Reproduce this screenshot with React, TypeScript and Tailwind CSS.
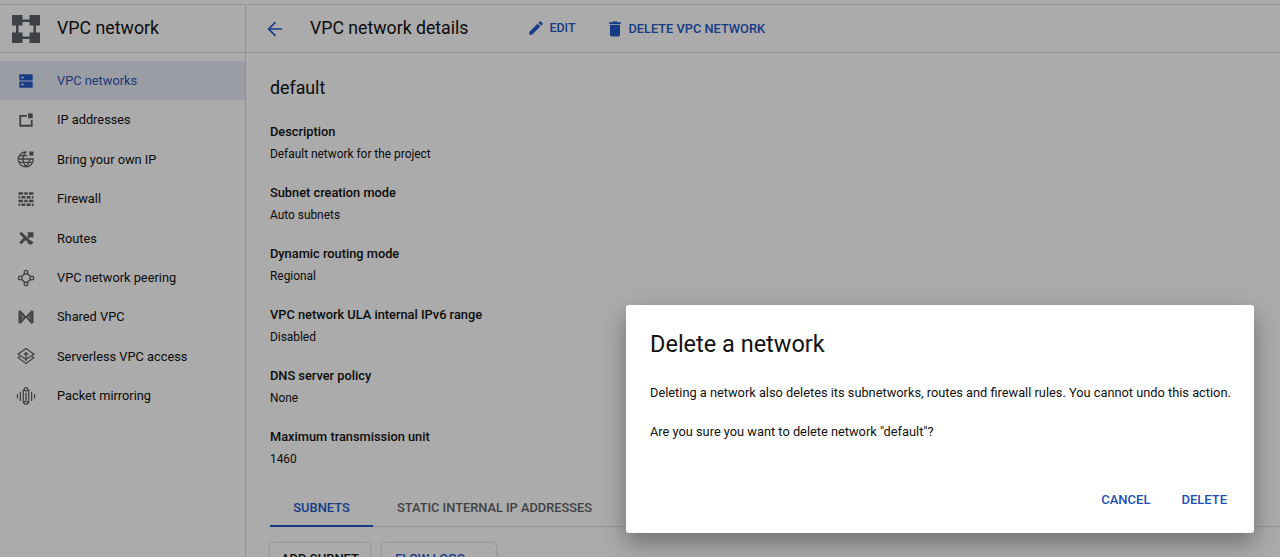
import type { ReactNode } from 'react';
import { ArrowLeft } from 'lucide-react';

function NavIcon({ children, className }: { children: ReactNode; className?: string }) {
  return (
    <svg viewBox="0 0 24 24" className={className ?? 'h-[20px] w-[20px] text-[#5f6368]'} fill="currentColor">
      {children}
    </svg>
  );
}

const nav = [
  {
    label: 'VPC networks',
    active: true,
    icon: (
      <>
        <path fillRule="evenodd" d="M4 4h16v7.500H4zM4 12.500h16V20H4zM6.500 6.500h2.500V9H6.500zM6.500 15h2.500v2.500H6.500z" />
      </>
    ),
  },
  {
    label: 'IP addresses',
    icon: (
      <>
        <path d="M4 6h9v2.200H6.200v9.600h11.600V12H20v8H4z" />
        <path d="M14.500 4H20v6h-5.500z" />
      </>
    ),
  },
  {
    label: 'Bring your own IP',
    icon: (
      <g>
        <path fill="none" stroke="currentColor" strokeWidth="1.600" d="M13 3.600A9 9 0 1 0 20.600 11M3 12h18M3.800 8h10M3.800 16h16.400M12 3c-5 5.500-5 12.500 0 18c3-3.300 4.500-6.500 4.500-9" />
        <path d="M16 3h5v5h-5z" />
      </g>
    ),
  },
  {
    label: 'Firewall',
    icon: (
      <path d="M3 4h5.500v3H3zM10 4h4v3h-4zM15.500 4H21v3h-5.500zM3 8.500h2v3H3zM6.500 8.500h4.700v3H6.500zM12.800 8.500h4.700v3h-4.700zM19 8.500h2v3h-2zM3 13h5.500v3H3zM10 13h4v3h-4zM15.500 13H21v3h-5.500zM3 17.500h2v3H3zM6.500 17.500h4.700v3H6.500zM12.800 17.500h4.700v3h-4.700zM19 17.500h2v3h-2z" />
    ),
  },
  {
    label: 'Routes',
    icon: (
      <path d="M4 7 6.500 4.500 19 17 16.500 19.500zM4 17 9 12 11.500 14.500 6.500 19.500zM13 10.500 15.500 8H14V5H21V11.500H18V10L15.500 13zM14 16H17V14L21 17.500 17 21V19H14z" />
    ),
  },
  {
    label: 'VPC network peering',
    icon: (
      <g fill="none" stroke="currentColor" strokeWidth="1.600">
        <circle cx="12" cy="5" r="2.200" />
        <circle cx="12" cy="19" r="2.200" />
        <circle cx="5" cy="12" r="2.200" />
        <circle cx="19" cy="12" r="2.200" />
        <path d="M10.500 6.500 6.500 10.500M13.500 6.500 17.500 10.500M6.500 13.500 10.500 17.500M17.500 13.500 13.500 17.500" />
      </g>
    ),
  },
  {
    label: 'Shared VPC',
    icon: (
      <g>
        <path d="M3 4.500h2v15H3zM19 4.500h2v15h-2z" />
        <path fill="currentColor" fillOpacity="0.55" stroke="currentColor" strokeWidth="2" d="M6 6 11.500 12 6 18zM18 6 12.500 12 18 18z" />
      </g>
    ),
  },
  {
    label: 'Serverless VPC access',
    icon: (
      <g fill="none" stroke="currentColor" strokeWidth="1.500">
        <path d="M12 3 21.500 10 12 16 2.500 10z" />
        <path d="M5 12.500 2.500 14 12 21 21.500 14 19 12.500" />
        <path d="M12 8v10M9.500 10.500 12 8l2.500 2.500" />
      </g>
    ),
  },
  {
    label: 'Packet mirroring',
    icon: (
      <g>
        <path d="M1 10h1.500v5H1zM4.500 7H6v11H4.500zM8 4h1.500v17H8zM14.500 4H16v17h-1.500zM18 7h1.500v11H18zM21.500 10H23v5h-1.500zM11.300 8h1.500v9h-1.500z" />
        <g fill="#fff" stroke="currentColor" strokeWidth="1.500">
          <circle cx="12" cy="4" r="2" />
          <circle cx="12" cy="20" r="2" />
        </g>
      </g>
    ),
  },
];

const details = [
  { label: 'Description', value: 'Default network for the project' },
  { label: 'Subnet creation mode', value: 'Auto subnets' },
  { label: 'Dynamic routing mode', value: 'Regional' },
  { label: 'VPC network ULA internal IPv6 range', value: 'Disabled' },
  { label: 'DNS server policy', value: 'None' },
  { label: 'Maximum transmission unit', value: '1460' },
];

export default function App() {
  return (
    <div className="relative h-[557px] w-[1280px] overflow-hidden bg-white font-['Roboto',sans-serif] text-[#111111]">
      <div className="h-[5px] border-b border-[#e0e0e0]" />
      <div className="flex h-[552px]">
        <aside className="w-[246px] flex-shrink-0 border-r border-[#dadce0]">
          <div className="flex h-[48px] items-center border-b border-[#dadce0] pl-[12px]">
            <svg viewBox="0 0 28 28" className="h-[28px] w-[28px] text-[#5f6368]" fill="currentColor">
              <path d="M0 0h10.500v10.500H0zM17.500 0H28v10.500H17.500zM0 17.500h10.500V28H0zM17.500 17.500H28V28H17.500zM10 4.500h8v2.500h-8zM10 21.500h8V24h-8zM4 10h2.500v8H4zM21.500 10H24v8h-2.500z" />
            </svg>
            <span className="ml-[17px] text-[17.800px]">VPC network</span>
          </div>
          <nav className="pt-[8px]">
            {nav.map((item) => (
              <div
                key={item.label}
                className={
                  item.active
                    ? 'flex h-[39.400px] items-center bg-[#e8eaf6] text-[#2f52b0]'
                    : 'flex h-[39.400px] items-center'
                }
              >
                <div className="flex w-[57px] justify-center pr-[6px]">
                  <NavIcon className={item.active ? 'h-[20px] w-[20px] text-[#2558c8]' : 'h-[20px] w-[20px] text-[#5f6368]'}>
                    {item.icon}
                  </NavIcon>
                </div>
                <span className="text-[12.800px]">{item.label}</span>
              </div>
            ))}
          </nav>
        </aside>

        <main className="min-w-0 flex-1">
          <div className="flex h-[48px] items-center border-b border-[#dadce0] pl-[18px]">
            <ArrowLeft className="h-[22px] w-[22px] text-[#2558c8]" strokeWidth={1.8} />
            <h1 className="ml-[24px] text-[17.700px]">VPC network details</h1>
            <button className="ml-[59px] flex items-center text-[12.400px] font-medium text-[#2558c8]">
              <svg viewBox="0 0 24 24" className="mr-[4px] h-[18px] w-[18px]" fill="currentColor">
                <path d="M3 17.250V21h3.750L17.810 9.940l-3.750-3.750zM20.710 7.040a1 1 0 0 0 0-1.410l-2.340-2.340a1 1 0 0 0-1.410 0l-1.830 1.830 3.750 3.750z" />
              </svg>
              EDIT
            </button>
            <button className="ml-[30px] flex items-center text-[12.800px] font-medium text-[#2558c8]">
              <svg viewBox="0 0 24 24" className="mr-[3px] h-[20px] w-[20px]" fill="currentColor">
                <path d="M6 19c0 1.100.9 2 2 2h8c1.100 0 2-.9 2-2V7H6zM19 4h-3.500l-1-1h-5l-1 1H5v2h14z" />
              </svg>
              DELETE VPC NETWORK
            </button>
          </div>

          <div className="pl-[24px]">
            <h2 className="mt-[24px] text-[17.800px] leading-[22px]">default</h2>
            <div className="mt-[24px] flex flex-col gap-[22px]">
              {details.map((d) => (
                <div key={d.label} className="h-[39px]">
                  <div className="text-[12.800px] leading-[18px] font-medium">{d.label}</div>
                  <div className="mt-[4px] text-[11.900px] leading-[18px]">{d.value}</div>
                </div>
              ))}
            </div>

            <div className="mt-[23px] flex h-[37px] border-b border-[#dadce0]">
              <div className="flex h-[37px] w-[103px] items-center justify-center border-b-[2px] border-[#2558c8] text-[12.900px] font-medium text-[#2558c8]">
                SUBNETS
              </div>
              <div className="flex h-[36px] items-center px-[24px] text-[12.800px] font-medium text-[#5f6368]">
                STATIC INTERNAL IP ADDRESSES
              </div>
            </div>

            <div className="mt-[16px] flex gap-[12px]">
              <button className="flex h-[36px] w-[100px] items-start justify-center rounded-[4px] bg-white pt-[6px] text-[13px] font-medium shadow-[0_0_3px_rgba(0,0,0,0.3)]">
                ADD SUBNET
              </button>
              <button className="flex h-[36px] w-[114px] items-start justify-center rounded-[4px] bg-white pt-[6px] text-[13px] font-medium text-[#2558c8] shadow-[0_0_3px_rgba(0,0,0,0.3)]">
                FLOW LOGS
                <span className="mt-[8px] ml-[8px] h-0 w-0 border-x-[5px] border-t-[5px] border-x-transparent border-t-[#2558c8]" />
              </button>
            </div>
          </div>
        </main>
      </div>

      {/* scrim + dialog */}
      <div className="absolute inset-0 bg-black/[0.33]" />
      <div className="absolute top-[305px] left-[626px] flex h-[228px] w-[628px] flex-col rounded-[3px] bg-white px-[24px] shadow-[0_10px_24px_rgba(0,0,0,0.35)]">
        <h3 className="mt-[23px] text-[23.500px] leading-[32px] font-normal text-[#111111]">Delete a network</h3>
        <p className="mt-[23px] text-[12.800px] leading-[20px] whitespace-nowrap text-[#111111]">
          Deleting a network also deletes its subnetworks, routes and firewall rules. You cannot undo this action.
        </p>
        <p className="mt-[19px] text-[12.800px] leading-[20px] text-[#111111]">Are you sure you want to delete network "default"?</p>
        <div className="mt-auto mb-[24px] flex justify-end gap-[31px] pr-[3px] text-[13px] font-medium text-[#1a4fb5]">
          <button>CANCEL</button>
          <button>DELETE</button>
        </div>
      </div>
    </div>
  );
}
